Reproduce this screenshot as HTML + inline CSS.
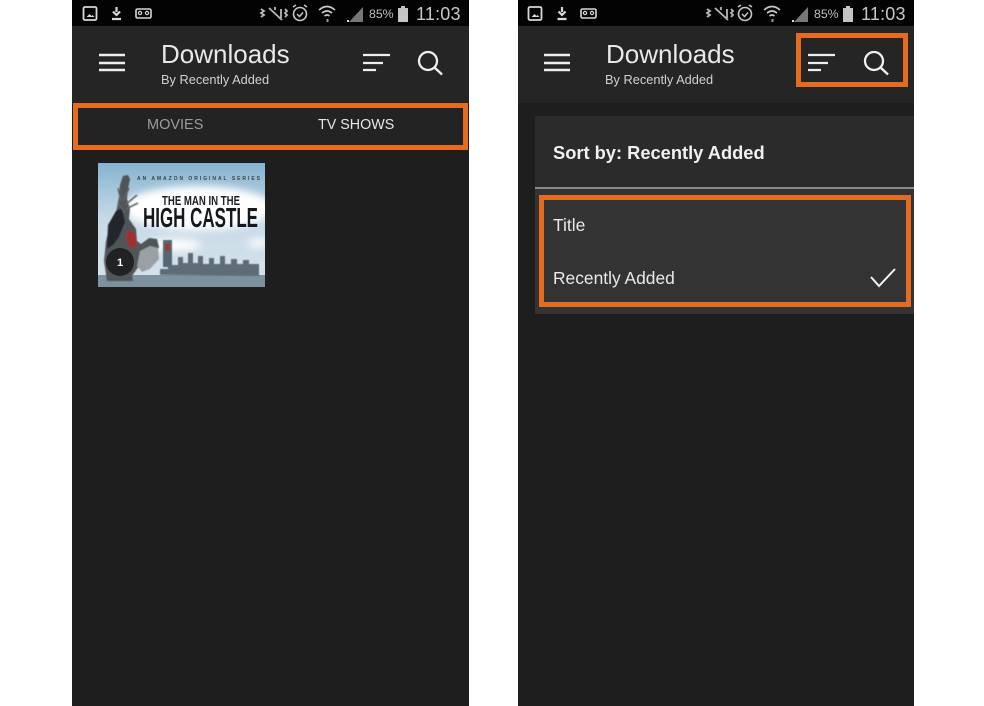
<!DOCTYPE html>
<html><head><meta charset="utf-8">
<style>
html,body{margin:0;padding:0;background:#fff}
body{width:984px;height:706px;position:relative;overflow:hidden;font-family:"Liberation Sans",sans-serif}
.a{position:absolute}
.phone{position:absolute;top:0;width:397px;height:706px;background:#1e1e1e;overflow:hidden}
.status{position:absolute;left:0;top:0;width:100%;height:26px;background:#030303}
.head{position:absolute;left:0;top:26px;width:100%;height:77px;background:#252525}
.t{position:absolute;white-space:nowrap;color:#fff}
.title{left:89px;top:39px;font-size:26px;line-height:30px;color:#e8e8e8;letter-spacing:0}
.sub{left:89px;top:72px;font-size:12.8px;line-height:16px;color:#d0d0d0}
.pct{left:297px;top:7px;font-size:12.3px;line-height:15px;color:#c0c0c0}
.time{left:344px;top:4px;font-size:18px;line-height:21px;color:#c8c8c8;letter-spacing:.2px}
svg{position:absolute;left:0;top:0;overflow:visible}
.box{position:absolute;box-sizing:border-box;border:5px solid #e46c21}
</style></head><body>

<div class="phone" style="left:72px">
  <div class="status"></div><div class="head"></div>
  <svg width="397" height="110" fill="none" stroke="#d8d8d8">
    <rect x="11.500" y="7" width="13" height="13" rx="1.500" stroke-width="1.800"/>
    <path d="M14.500 17l3-3 2 2 1-1 2 2z" fill="#d8d8d8" stroke="none"/>
    <path d="M44.500 7v5M41 11.500l3.500 3.500 3.500-3.500M40 19h9" stroke-width="2.200"/>
    <rect x="64" y="9" width="15" height="9" rx="1.500" stroke-width="1.600"/>
    <circle cx="68" cy="13" r="1.600" stroke-width="1.200"/><circle cx="75" cy="13" r="1.600" stroke-width="1.200"/>
    <path d="M189 9l3 2-3 2 3 2-3 2M197 8l13 12M203 7v3M209 9v9M213 9l2 2-2 2 2 2-2 2" stroke="#b8b8b8" stroke-width="1.800"/>
    <circle cx="228" cy="14" r="6.500" stroke="#c8c8c8" stroke-width="1.600"/>
    <path d="M225 14l2.500 2.500 3.500-4M221 7l3-2M235 7l-3-2" stroke="#c8c8c8" stroke-width="1.500"/>
    <path d="M247 10q8-7 16 0M250 13q5-4 10 0M252.500 16q2.500-2 5 0" stroke="#c8c8c8" stroke-width="1.700"/>
    <path d="M255 19v3M256 19v3" stroke="#999" stroke-width="1"/>
    <path d="M277 22L291 7v15z" fill="#777" stroke="none"/>
    <rect x="275" y="20" width="2" height="2" fill="#ddd" stroke="none"/>
    <rect x="326" y="8" width="10" height="14" fill="#c4c4c4" stroke="none"/>
    <rect x="329" y="6" width="4" height="2" fill="#c4c4c4" stroke="none"/>
    <path d="M27 55h26M27 63h26M27 70h26" stroke="#eee" stroke-width="2.400"/>
    <path d="M291 55h27M291 63h20M291 70h13" stroke="#eee" stroke-width="2.200"/>
    <circle cx="356" cy="61" r="9" stroke="#eee" stroke-width="2.300"/>
    <path d="M362.500 67.500L370 74.500" stroke="#eee" stroke-width="2.400"/>
  </svg>
  <div class="t title">Downloads</div>
  <div class="t sub">By Recently Added</div>
  <div class="t pct">85%</div>
  <div class="t time">11:03</div>
  <div class="a" style="left:5px;top:108px;width:387px;height:38px;background:#232323"></div>
  <div class="t" style="left:75px;top:117px;font-size:14.500px;line-height:17px;color:#9c9c9c">MOVIES</div>
  <div class="t" style="left:246px;top:117px;font-size:14.300px;line-height:17px;color:#e6e6e6">TV SHOWS</div>
  <div class="box" style="left:1px;top:103px;width:395px;height:47px"></div>
  <svg viewBox="0 0 167 124" style="left:26px;top:163px;width:167px;height:124px;overflow:hidden">
    <defs>
      <linearGradient id="sky" x1="0" y1="0" x2="0" y2="1"><stop offset="0" stop-color="#86b3d0"/><stop offset=".45" stop-color="#c6dae7"/><stop offset="1" stop-color="#d7e3ea"/></linearGradient>
      <filter id="bl" x="-30%" y="-60%" width="160%" height="220%"><feGaussianBlur stdDeviation="4"/></filter>
      <filter id="b2"><feGaussianBlur stdDeviation=".6"/></filter>
    </defs>
    <rect width="167" height="124" fill="url(#sky)"/>
    <g filter="url(#bl)" fill="#fff">
      <ellipse cx="100" cy="45" rx="75" ry="22"/>
      <ellipse cx="75" cy="82" rx="28" ry="6"/>
      <ellipse cx="160" cy="80" rx="10" ry="4"/>
    </g>
    <rect y="112" width="167" height="12" fill="#7c929f"/>
    <g filter="url(#b2)">
      <path d="M62 112v-6h8v-4h10v-8h5v6h5v-10h5v10h5v-7h5v8h6v-6h5v6h6v-8h5v8h6v-5h6v5h6v-4h6v4h10v12z" fill="#5d6c77"/>
      <rect x="65" y="77" width="9" height="27" fill="#566673"/>
      <rect x="67" y="80" width="5" height="8" fill="#8d3c3c"/>
      <path d="M21 34l1-12 3-9 5-1 2 4-2 10-1 10 3 10-1 10 7 10 1 12 4 3 8-6 8 1 2 8-4 9-8 6-8 4-7 10 1 5H9l-3-20 2-20 4-16 6-12z" fill="#4f5459"/>
      <path d="M10 62l8-14 6-3 3 14-6 15-6 8-6 4z" fill="#24272a"/>
      <path d="M30 67l7 3 2 12-6 4-5-10z" fill="#a12d2d"/>
      <path d="M42 88l10-5 8 2 1 11-9 10-8 3-5-6z" fill="#9aa0a3"/>
      <path d="M27 50l-7-10M28 46l12-6M27 42l12-10M25 38l6-13M23 38l-3-13" stroke="#5e6469" stroke-width="1.600" fill="none"/>
    </g>
    <circle cx="22" cy="99" r="14" fill="#202224"/>
    <text x="22" y="103" font-size="11" font-weight="700" fill="#fff" text-anchor="middle">1</text>
    <text x="39" y="17" font-size="5" font-weight="700" fill="#39434c" textLength="123" stroke="none">AN AMAZON ORIGINAL SERIES</text>
    <text x="64" y="42" font-size="13" font-weight="700" fill="#1c2025" textLength="78" lengthAdjust="spacingAndGlyphs">THE MAN IN THE</text>
    <text x="45" y="64" font-size="28" font-weight="700" fill="#15191d" textLength="115" lengthAdjust="spacingAndGlyphs">HIGH CASTLE</text>
  </svg>
</div>

<div class="phone" style="left:518px;width:396px">
  <div class="status"></div><div class="head"></div>
  <svg width="397" height="110" fill="none" stroke="#d8d8d8">
    <rect x="10.500" y="7" width="13" height="13" rx="1.500" stroke-width="1.800"/>
    <path d="M13.500 17l3-3 2 2 1-1 2 2z" fill="#d8d8d8" stroke="none"/>
    <path d="M44 7v5M40.500 11.500l3.500 3.500 3.500-3.500M39.500 19h9" stroke-width="2.200"/>
    <rect x="63" y="9" width="15" height="9" rx="1.500" stroke-width="1.600"/>
    <circle cx="67" cy="13" r="1.600" stroke-width="1.200"/><circle cx="74" cy="13" r="1.600" stroke-width="1.200"/>
    <path d="M189 9l3 2-3 2 3 2-3 2M197 8l13 12M203 7v3M209 9v9M213 9l2 2-2 2 2 2-2 2" stroke="#b8b8b8" stroke-width="1.800"/>
    <circle cx="227" cy="14" r="6.500" stroke="#c8c8c8" stroke-width="1.600"/>
    <path d="M224 14l2.500 2.500 3.500-4M220 7l3-2M234 7l-3-2" stroke="#c8c8c8" stroke-width="1.500"/>
    <path d="M246 10q8-7 16 0M249 13q5-4 10 0M251.500 16q2.500-2 5 0" stroke="#c8c8c8" stroke-width="1.700"/>
    <path d="M254 19v3M255 19v3" stroke="#999" stroke-width="1"/>
    <path d="M276 22L290 7v15z" fill="#777" stroke="none"/>
    <rect x="274" y="20" width="2" height="2" fill="#ddd" stroke="none"/>
    <rect x="325" y="8" width="10" height="14" fill="#c4c4c4" stroke="none"/>
    <rect x="328" y="6" width="4" height="2" fill="#c4c4c4" stroke="none"/>
    <path d="M26 55h26M26 63h26M26 70h26" stroke="#eee" stroke-width="2.400"/>
    <path d="M290 55h27M290 63h20M290 70h13" stroke="#eee" stroke-width="2.200"/>
    <circle cx="356" cy="61" r="9" stroke="#eee" stroke-width="2.300"/>
    <path d="M362.500 67.500L370 74.500" stroke="#eee" stroke-width="2.400"/>
  </svg>
  <div class="t title" style="left:88px">Downloads</div>
  <div class="t sub" style="left:87px">By Recently Added</div>
  <div class="t pct" style="left:296px">85%</div>
  <div class="t time" style="left:343px">11:03</div>
  <div class="box" style="left:278px;top:33px;width:112px;height:54px"></div>
  <div class="a" style="left:17px;top:116px;width:379px;height:71px;background:#2b2b2b"></div>
  <div class="a" style="left:17px;top:187px;width:379px;height:2px;background:#8a8a8a"></div>
  <div class="a" style="left:17px;top:189px;width:379px;height:125px;background:#333"></div>
  <div class="t" style="left:35px;top:142px;font-size:18.300px;line-height:22px;font-weight:700;color:#f0f0f0">Sort by: Recently Added</div>
  <div class="t" style="left:35px;top:215px;font-size:17.500px;line-height:20px;color:#e8e8e8">Title</div>
  <div class="t" style="left:35px;top:268px;font-size:17.400px;line-height:20px;color:#e8e8e8">Recently Added</div>
  <svg width="396" height="320" fill="none"><path d="M353 277l8 9 16-17" stroke="#f2f2f2" stroke-width="2"/></svg>
  <div class="box" style="left:21px;top:195px;width:372px;height:112px"></div>
</div>
</body></html>
